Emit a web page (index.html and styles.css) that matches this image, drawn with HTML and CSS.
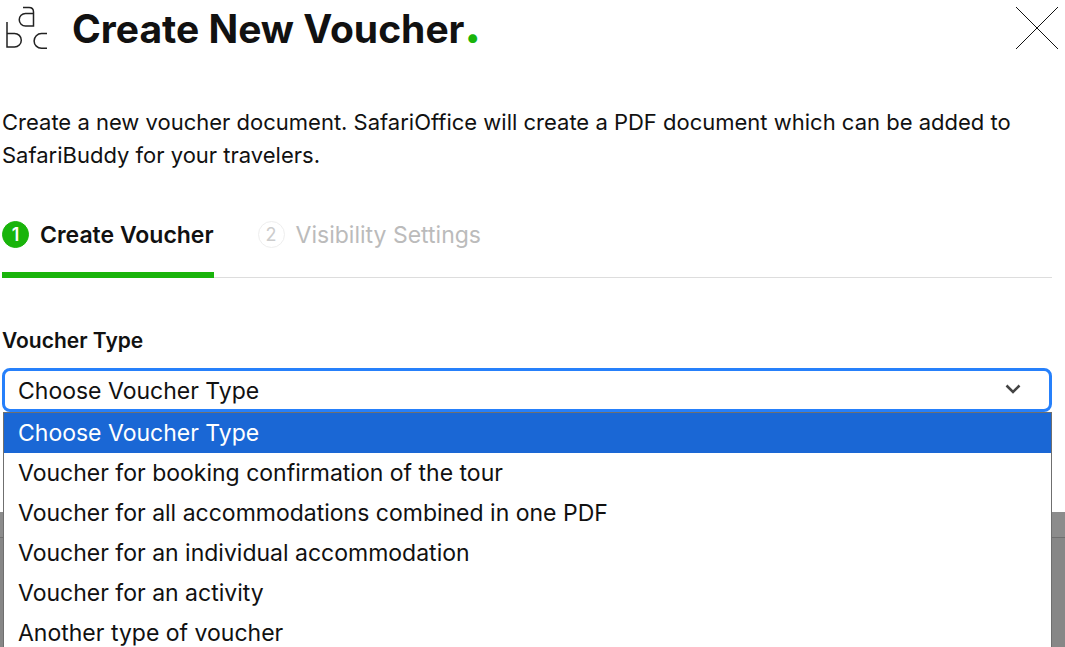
FILE: index.html
```
<!DOCTYPE html>
<html lang="en">
<head>
    <meta charset="UTF-8">
    <meta name="viewport" content="width=device-width, initial-scale=1.0">
    <title>Create New Voucher</title>
    <link rel="stylesheet" href="styles.css">
</head>
<body>

    <main class="modal">
        <header class="modal-header">
            <svg class="logo" viewBox="0 0 42 44" aria-hidden="true">
                <path d="M17 1.500h6q4.500 0 4.500 4.500v14h-8a6 6 0 0 1 0-12.500h8"/>
                <path d="M1 16v25h7.500a6.800 6.800 0 0 0 0-13.600h-7.500"/>
                <path d="M41 27.500h-5.500a7.400 7.400 0 0 0 0 14.800h5.500"/>
            </svg>
            <h1>Create New Voucher<span class="dot">.</span></h1>
            <button type="button" class="close" aria-label="Close">
                <svg viewBox="0 0 44 44" aria-hidden="true">
                    <path d="M1 1l42 42M43 1L1 43"/>
                </svg>
            </button>
        </header>

        <p class="intro">Create a new voucher document. SafariOffice will create a PDF document which can be added to SafariBuddy for your travelers.</p>

        <nav class="steps">
            <button type="button" class="step active"><span class="number">1</span>Create Voucher</button>
            <button type="button" class="step"><span class="number">2</span>Visibility Settings</button>
        </nav>

        <form>
            <label for="voucher-type">Voucher Type</label>
            <div class="select-box">
                <select id="voucher-type">
                    <option>Choose Voucher Type</option>
                </select>
                <svg class="chevron" viewBox="0 0 16 10" aria-hidden="true">
                    <path d="M1.500 1.500L8 8l6.500-6.500"/>
                </svg>
                <ul class="options" role="listbox" aria-label="Voucher Type">
                    <li role="option" aria-selected="true" class="selected">Choose Voucher Type</li>
                    <li role="option">Voucher for booking confirmation of the tour</li>
                    <li role="option">Voucher for all accommodations combined in one PDF</li>
                    <li role="option">Voucher for an individual accommodation</li>
                    <li role="option">Voucher for an activity</li>
                    <li role="option">Another type of voucher</li>
                </ul>
            </div>
        </form>
    </main>

    <!-- Dimmed page under the modal -->
    <div class="backdrop"></div>

</body>
</html>
```
FILE: styles.css
```
* {
    box-sizing: border-box;
}
body {
    margin: 0;
    height: 100vh;
    overflow: hidden;
    display: flex;
    flex-direction: column;
    font-family: Inter, "Liberation Sans", sans-serif;
    font-size: 23px;
    color: #111;
    background: #878787;
}
.modal {
    padding: 4px 13px 100px 2px;
    background: #fff;
}
.modal-header {
    display: flex;
    align-items: center;
    height: 48px;
    margin-right: -7px;
}
.logo {
    width: 42px;
    height: 44px;
    margin: 0 24px 0 4px;
    fill: none;
    stroke: #222;
    stroke-width: 1.500;
}
h1 {
    margin: 0;
    padding-top: 2px;
    flex: 1;
    font-size: 39px;
    line-height: 48px;
    font-weight: 700;
}
.dot {
    font-size: 44px;
    line-height: 0;
    font-weight: 900;
    color: #19b40b;
}
.close {
    width: 44px;
    height: 44px;
    padding: 0;
    border: 0;
    background: none;
}
.close svg {
    display: block;
    stroke: #111;
    stroke-width: 1;
}
.intro {
    margin: 54px 0 47px;
    font-size: 22px;
    line-height: 33px;
}
.steps {
    display: flex;
    gap: 44px;
    height: 59px;
    border-bottom: 1px solid #ddd;
}
.step {
    display: flex;
    align-items: flex-start;
    height: 59px;
    padding: 0;
    border: 0;
    background: none;
    font: inherit;
    line-height: 32px;
    color: #bbb;
}
.step.active {
    border-bottom: 6px solid #19b40b;
    font-weight: 600;
    color: #111;
}
.number {
    width: 27px;
    height: 27px;
    margin: 2px 11px 0 0;
    border: 1px solid #eee;
    border-radius: 50%;
    font-size: 18px;
    line-height: 25px;
    text-align: center;
    color: #ccc;
}
.active .number {
    border-color: #19b40b;
    background: #19b40b;
    color: #fff;
}
label {
    display: block;
    margin: 50px 0 14px;
    font-size: 21px;
    line-height: 26px;
    font-weight: 600;
}
.select-box {
    position: relative;
}
select {
    display: block;
    width: 100%;
    height: 44px;
    padding: 2px 13px 0;
    border: 3px solid #2680fb;
    border-radius: 8px;
    outline: 0;
    appearance: none;
    background: #fff;
    font: inherit;
    color: #111;
}
.chevron {
    position: absolute;
    top: 16px;
    right: 31px;
    width: 16px;
    height: 10px;
    fill: none;
    stroke: #444;
    stroke-width: 2.500;
    pointer-events: none;
}
/* Open list, laid over the rest of the page */
.options {
    position: absolute;
    top: 100%;
    left: 1px;
    right: 0;
    margin: 0;
    padding: 0;
    border: 1px solid #6f6f6f;
    background: #fff;
    list-style: none;
}
.options li {
    height: 40px;
    padding: 0 14px;
    line-height: 40px;
}
.options .selected {
    background: #1a67d5;
    color: #fff;
}
.backdrop {
    height: 26px;
    border-bottom: 1px solid #6f6f6f;
    background: #8c8c8c;
}
```
